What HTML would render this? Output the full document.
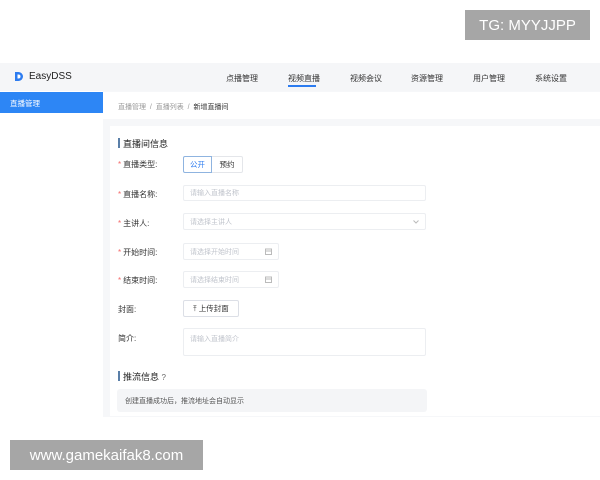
<!DOCTYPE html>
<html><head><meta charset="utf-8"><style>
*{margin:0;padding:0;box-sizing:border-box}
body{width:600px;height:480px;background:#fff;position:relative;overflow:hidden;font-family:"Liberation Sans","Noto Sans CJK SC",sans-serif;font-size:8px;color:#333}
.a{position:absolute}
.wm{background:#a6a6a6;color:#fff;font-family:"Liberation Sans","DejaVu Sans",sans-serif;display:flex;align-items:center;justify-content:center}
.inp{position:absolute;border:1px solid #eceef1;border-radius:2px;background:#fff;color:#c0c4cc;font-size:7px;padding-left:6px;display:flex;align-items:center}
.lbl{position:absolute;left:118px;font-size:8px;color:#333}
.lbl b{color:#f56c6c;font-weight:normal;margin-right:2px}
.nav{position:absolute;top:73px;font-size:8px;color:#333}
</style></head><body>
<div class="a wm" style="left:465px;top:10px;width:125px;height:30px;font-size:15px">TG: MYYJJPP</div>
<div class="a" style="left:0;top:63px;width:600px;height:28px;background:#f5f6f8"></div>
<svg class="a" style="left:14px;top:71px" width="10" height="11" viewBox="0 0 10 11"><path d="M1 1h3.5a4.5 4.5 0 0 1 0 9H1z" fill="#2d7cf0"/><path d="M3.5 3.5h1a2 2 0 0 1 0 4h-1z" fill="#fff"/></svg>
<div class="a" style="left:29px;top:71px;font-size:10px;color:#222">EasyDSS</div>
<div class="nav" style="left:226px">点播管理</div>
<div class="nav" style="left:288px">视频直播</div>
<div class="a" style="left:288px;top:85px;width:28px;height:1.5px;background:#2d7cf0"></div>
<div class="nav" style="left:350px">视频会议</div>
<div class="nav" style="left:411px">资源管理</div>
<div class="nav" style="left:473px">用户管理</div>
<div class="nav" style="left:535px">系统设置</div>
<div class="a" style="left:0;top:92px;width:103px;height:21px;background:#2d86f5;color:#fff;font-size:7.5px;padding:6px 0 0 10px">直播管理</div>
<div class="a" style="left:103px;top:91px;width:497px;height:326px;background:#f6f7f9"></div>
<div class="a" style="left:103px;top:92px;width:497px;height:27px;background:#fff"></div>
<div class="a" style="left:118px;top:102px;font-size:7px;color:#999">直播管理 &nbsp;/&nbsp; 直播列表 &nbsp;/&nbsp; <span style="color:#333">新增直播间</span></div>
<div class="a" style="left:110px;top:126px;width:490px;height:290px;background:#fff"></div>
<div class="a" style="left:118px;top:138px;width:2px;height:10px;background:#5a7fa8"></div>
<div class="a" style="left:123px;top:137px;font-size:9px;color:#222">直播间信息</div>
<div class="lbl" style="top:159px"><b>*</b>直播类型:</div>
<div class="a" style="left:183px;top:156px;width:29px;height:17px;border:1px solid #8fb4e0;border-radius:2px 0 0 2px;color:#2d7cf0;font-size:7.5px;display:flex;align-items:center;justify-content:center;background:#fff">公开</div>
<div class="a" style="left:212px;top:156px;width:31px;height:17px;border:1px solid #e4e6ea;border-left:none;border-radius:0 2px 2px 0;font-size:7.5px;display:flex;align-items:center;justify-content:center">预约</div>
<div class="lbl" style="top:189px"><b>*</b>直播名称:</div>
<div class="inp" style="left:183px;top:185px;width:243px;height:16px">请输入直播名称</div>
<div class="lbl" style="top:218px"><b>*</b>主讲人:</div>
<div class="inp" style="left:183px;top:213px;width:243px;height:17px">请选择主讲人<svg style="position:absolute;right:6px;top:6px" width="6" height="4"><path d="M0.5 0.5L3 3L5.5 0.5" stroke="#bbb" fill="none"/></svg></div>
<div class="lbl" style="top:247px"><b>*</b>开始时间:</div>
<div class="inp" style="left:183px;top:243px;width:96px;height:17px">请选择开始时间<svg style="position:absolute;right:6px;top:4px" width="7" height="7"><rect x="0.5" y="1" width="6" height="5.5" stroke="#bbb" fill="none"/><path d="M0.5 3H6.5" stroke="#bbb"/></svg></div>
<div class="lbl" style="top:275px"><b>*</b>结束时间:</div>
<div class="inp" style="left:183px;top:271px;width:96px;height:17px">请选择结束时间<svg style="position:absolute;right:6px;top:4px" width="7" height="7"><rect x="0.5" y="1" width="6" height="5.5" stroke="#bbb" fill="none"/><path d="M0.5 3H6.5" stroke="#bbb"/></svg></div>
<div class="lbl" style="top:304px">封面:</div>
<div class="a" style="left:183px;top:300px;width:56px;height:17px;border:1px solid #dcdfe6;border-radius:2px;font-size:7.5px;display:flex;align-items:center;justify-content:center">⤒&nbsp;上传封面</div>
<div class="lbl" style="top:333px">简介:</div>
<div class="inp" style="left:183px;top:328px;width:243px;height:28px;align-items:flex-start;padding-top:5px">请输入直播简介</div>
<div class="a" style="left:118px;top:371px;width:2px;height:10px;background:#5a7fa8"></div>
<div class="a" style="left:123px;top:370px;font-size:9px;color:#222">推流信息 <span style="font-size:8px;color:#666">?</span></div>
<div class="a" style="left:117px;top:389px;width:310px;height:23px;background:#f4f5f7;border-radius:3px;font-size:7px;color:#555;padding:7px 0 0 8px">创建直播成功后，推流地址会自动显示</div>
<div class="a wm" style="left:10px;top:440px;width:193px;height:30px;font-size:15px">www.gamekaifak8.com</div>
</body></html>
